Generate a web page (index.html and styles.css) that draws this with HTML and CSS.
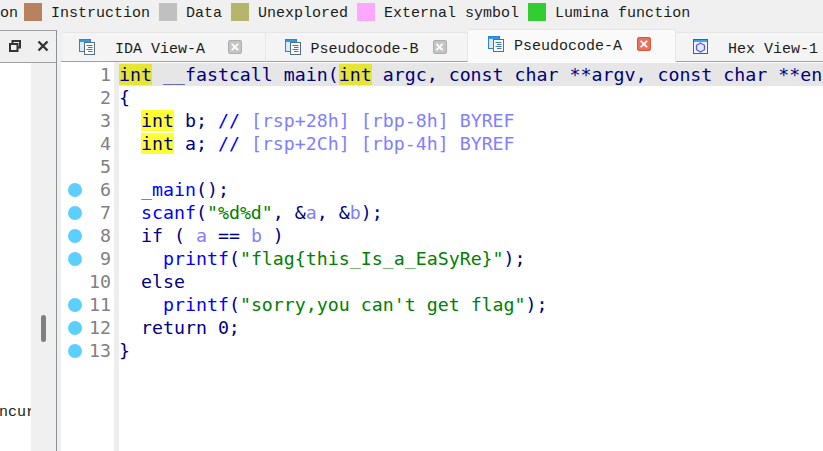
FILE: index.html
```html
<!DOCTYPE html>
<html lang="en">
<head>
<meta charset="utf-8">
<title>IDA Pseudocode-A</title>
<link rel="stylesheet" href="styles.css">
</head>
<body>
<svg class="defs" width="0" height="0" aria-hidden="true">
  <symbol id="doc" viewBox="0 0 16 16">
    <rect x="0.5" y="0.5" width="11" height="12" fill="#d8ecfc" stroke="#2f80d8"/>
    <rect x="1" y="1" width="10" height="2" fill="#2f9ae8"/>
    <rect x="5.5" y="3.5" width="10" height="12" fill="#fff" stroke="#50708c"/>
    <path d="M7.5 6.5h6M9 8.5h4.5M7.5 10.5h6M9 12.5h4.5" stroke="#3a78a8" fill="none"/>
  </symbol>
  <symbol id="hex" viewBox="0 0 16 16">
    <rect x="0.5" y="0.5" width="14" height="14" fill="#f4f6ff" stroke="#2c5cd8"/>
    <rect x="1" y="1" width="13" height="2" fill="#38a8f0"/>
    <path d="M7.5 4l4 2.300v4.400l-4 2.300l-4-2.300v-4.400z" fill="#e4e8ff" stroke="#5a5cf0" stroke-width="1.300"/>
  </symbol>
</svg>
<header class="legend">
  <span class="label first">on</span>
  <span class="swatch s-ins"></span><span class="label">Instruction</span>
  <span class="swatch s-data"></span><span class="label">Data</span>
  <span class="swatch s-unex"></span><span class="label">Unexplored</span>
  <span class="swatch s-ext"></span><span class="label">External symbol</span>
  <span class="swatch s-lum"></span><span class="label">Lumina function</span>
</header>
<div class="workspace">
  <aside class="side">
    <div class="side-head">
      <svg class="restore" viewBox="0 0 12 12" width="12" height="12"><path d="M3.500 3V1h7.500v6.500H8.500" fill="none" stroke="#333" stroke-width="2"/><rect x="1" y="4" width="7.500" height="7" fill="none" stroke="#333" stroke-width="2"/></svg>
      <svg class="closer" viewBox="0 0 12 12" width="12" height="12"><path d="M1.500 1.500l9 9M10.500 1.500l-9 9" stroke="#333" stroke-width="2.400" fill="none"/></svg>
    </div>
    <div class="side-body">
      <div class="side-list"><span class="clip-text">ncur</span></div>
      <div class="side-scroll"><span class="thumb"></span></div>
    </div>
  </aside>
  <main class="view">
    <nav class="tabs">
      <div class="tab"><svg class="tab-icon"><use href="#doc"/></svg><span class="tab-label">IDA View-A</span><span class="x">×</span></div>
      <div class="tab second"><svg class="tab-icon"><use href="#doc"/></svg><span class="tab-label">Pseudocode-B</span><span class="x">×</span></div>
      <div class="tab active"><svg class="tab-icon"><use href="#doc"/></svg><span class="tab-label">Pseudocode-A</span><span class="x">×</span></div>
      <div class="tab last"><svg class="tab-icon"><use href="#hex"/></svg><span class="tab-label">Hex View-1</span></div>
    </nav>
    <section class="editor">
      <div class="gutter">
        <div class="gl">1</div>
        <div class="gl">2</div>
        <div class="gl">3</div>
        <div class="gl">4</div>
        <div class="gl">5</div>
        <div class="gl"><i class="dot"></i>6</div>
        <div class="gl"><i class="dot"></i>7</div>
        <div class="gl"><i class="dot"></i>8</div>
        <div class="gl"><i class="dot"></i>9</div>
        <div class="gl">10</div>
        <div class="gl"><i class="dot"></i>11</div>
        <div class="gl"><i class="dot"></i>12</div>
        <div class="gl"><i class="dot"></i>13</div>
      </div>
      <div class="code">
        <div class="ln cur"><b class="hl">int</b> __fastcall main(<b class="hl">int</b> argc, const char **argv, const char **envp)</div>
        <div class="ln">{</div>
        <div class="ln">  <b class="hl y">int</b> b; <span class="fn">//</span> <span class="v">[rsp+28h] [rbp-8h] BYREF</span></div>
        <div class="ln">  <b class="hl y">int</b> a; <span class="fn">//</span> <span class="v">[rsp+2Ch] [rbp-4h] BYREF</span></div>
        <div class="ln"> </div>
        <div class="ln">  <span class="fn">_main</span>();</div>
        <div class="ln">  <span class="fn">scanf</span>(<span class="s">"%d%d"</span>, &amp;<span class="v">a</span>, &amp;<span class="v">b</span>);</div>
        <div class="ln">  if ( <span class="v">a</span> == <span class="v">b</span> )</div>
        <div class="ln">    <span class="fn">printf</span>(<span class="s">"flag{this_Is_a_EaSyRe}"</span>);</div>
        <div class="ln">  else</div>
        <div class="ln">    <span class="fn">printf</span>(<span class="s">"sorry,you can't get flag"</span>);</div>
        <div class="ln">  return 0;</div>
        <div class="ln">}</div>
      </div>
    </section>
  </main>
</div>
</body>
</html>
```
FILE: styles.css
```css
* { box-sizing: border-box; }
html, body { margin: 0; height: 100%; }
body {
  width: 823px;
  height: 451px;
  overflow: hidden;
  background: #f0f0f0;
  display: flex;
  flex-direction: column;
  font-family: "Liberation Mono", monospace;
}
.defs { display: block; height: 0; }

.legend {
  flex: none;
  height: 30px;
  padding-top: 3px;
  display: flex;
  align-items: flex-start;
  white-space: nowrap;
  font-size: 15px;
  line-height: 18px;
  color: #1c1c1c;
}
.swatch { flex: none; width: 18px; height: 18px; margin-right: 9px; }
.label { margin-right: 9px; padding-top: 2px; }
.first { margin-right: 6px; }
.s-ins { background: #b8815f; }
.s-data { background: #c0c0c0; }
.s-unex { background: #b5b56b; }
.s-ext { background: #ffa6ff; }
.s-lum { background: #32cd32; }

.workspace { flex: 1; min-height: 0; display: flex; }

.side {
  flex: none;
  width: 57px;
  margin-right: 4px;
  display: flex;
  flex-direction: column;
  border-right: 1px solid #8c9196;
}
.side-head {
  flex: none;
  height: 33px;
  border-top: 1px solid #a0a0a0;
  border-bottom: 1px solid #a0a0a0;
  display: flex;
  align-items: center;
  padding: 0 0 2px 9px;
  gap: 16px;
}
.side-body { flex: 1; min-height: 0; display: flex; }
.side-list {
  width: 31px;
  background: #fff;
  overflow: hidden;
  padding-top: 341px;
}
.clip-text {
  display: block;
  font: 15px/18px "Liberation Mono", monospace;
  color: #222;
  white-space: nowrap;
  margin-left: -1px;
}
.side-scroll { flex: 1; background: #f0f0f0; padding: 252px 0 0 10px; }
.thumb { display: block; width: 5px; height: 27px; border-radius: 3px; background: #808080; }

.view { flex: 1; min-width: 0; display: flex; flex-direction: column; background: #fff; }
.tabs {
  flex: none;
  height: 32px;
  background: #f0f0f0;
  display: flex;
  align-items: flex-end;
  padding-left: 2px;
  border-bottom: 1px solid #a0a0a0;
  font-size: 15px;
  white-space: nowrap;
  color: #1c1c1c;
}
.tab {
  flex: none;
  width: 202.500px;
  height: 30px;
  margin-bottom: -1px;
  border-top: 1px solid #e6e6e6;
  border-right: 1px solid #e6e6e6;
  border-bottom: 1px solid #a0a0a0;
  background: #f4f4f4;
  display: flex;
  align-items: center;
  padding-left: 16px;
}
.tab.second { padding-left: 19px; }
.tab.active {
  width: 208px;
  height: 33px;
  background: #fafafa;
  border-bottom: 1px solid #fafafa;
  padding: 0 0 4px 20px;
}
.tab.last { width: 150px; border-right: 0; padding-left: 17px; }
.tab-icon { flex: none; width: 16px; height: 16px; margin-right: 20px; }
.tab.second .tab-icon, .tab.active .tab-icon { margin-right: 10px; }
.tab.last .tab-icon { margin-right: 19px; }
.tab-label { width: 90px; padding-top: 5px; }
.tab.second .tab-label, .tab.active .tab-label { width: 108px; }
.x {
  flex: none;
  width: 14px;
  height: 14px;
  margin-left: 23px;
  border: 1px solid #adadad;
  border-radius: 2px;
  background: #c4c4c4;
  color: #fff;
  font: bold 15px/12px "Liberation Sans", sans-serif;
  text-align: center;
}
.tab.second .x { margin-left: 14px; }
.tab.active .x { background: #e8735a; border-color: #d9573a; margin-left: 15px; }

.editor {
  flex: 1;
  min-height: 0;
  display: flex;
  font: 18.250px/23px "DejaVu Sans Mono", monospace;
}
.gutter {
  flex: none;
  width: 58px;
  padding-top: 1px;
  border-right: 5px solid #ededed;
  color: #808080;
}
.gl { height: 23px; padding-right: 3px; display: flex; align-items: center; justify-content: flex-end; }
.dot {
  width: 14px;
  height: 14px;
  border-radius: 50%;
  background: #5ccfff;
  margin-right: auto;
  margin-left: 7px;
}
.code { flex: 1; min-width: 0; padding-top: 1px; overflow: hidden; color: #000080; }
.ln { height: 23px; white-space: pre; }
.cur { background: #e6e6e6; }
.hl { font-weight: normal; background: #e6e632; }
.hl.y { background: #ffff33; }
.fn { color: #0000ff; }
.v { color: #8080ff; }
.s { color: #008000; }
```
